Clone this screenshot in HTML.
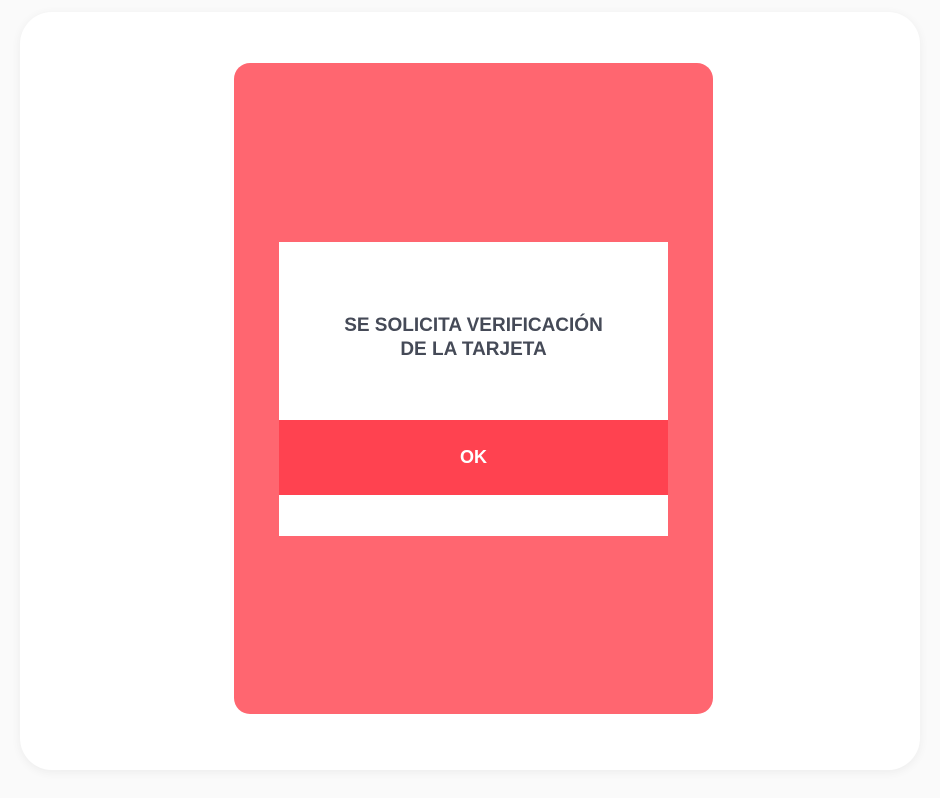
<!DOCTYPE html>
<html><head><style>
body{margin:0;width:940px;height:798px;background:#fafafa;position:relative;overflow:hidden;font-family:"Liberation Sans",sans-serif}
.card{position:absolute;left:20px;top:12px;width:900px;height:758px;background:#fff;border-radius:32px;box-shadow:0 2px 10px rgba(0,0,0,.06)}
.red{position:absolute;left:234px;top:63px;width:479px;height:651px;background:#ff6670;border-radius:16px}
.dlg{position:absolute;left:279px;top:242px;width:389px;height:294px;background:#fff}
.t{position:absolute;left:279px;width:389px;top:314px;text-align:center;font-weight:bold;font-size:19px;line-height:24px;color:#454a57}
.ok{position:absolute;left:279px;top:420px;width:389px;height:75px;background:#ff4250;color:#fff;font-weight:bold;font-size:18px;line-height:75px;text-align:center}
</style></head><body>
<div class="card"></div>
<div class="red"></div>
<div class="dlg"></div>
<div class="t">SE SOLICITA VERIFICACIÓN<br>DE LA TARJETA</div>
<div class="ok">OK</div>
</body></html>
